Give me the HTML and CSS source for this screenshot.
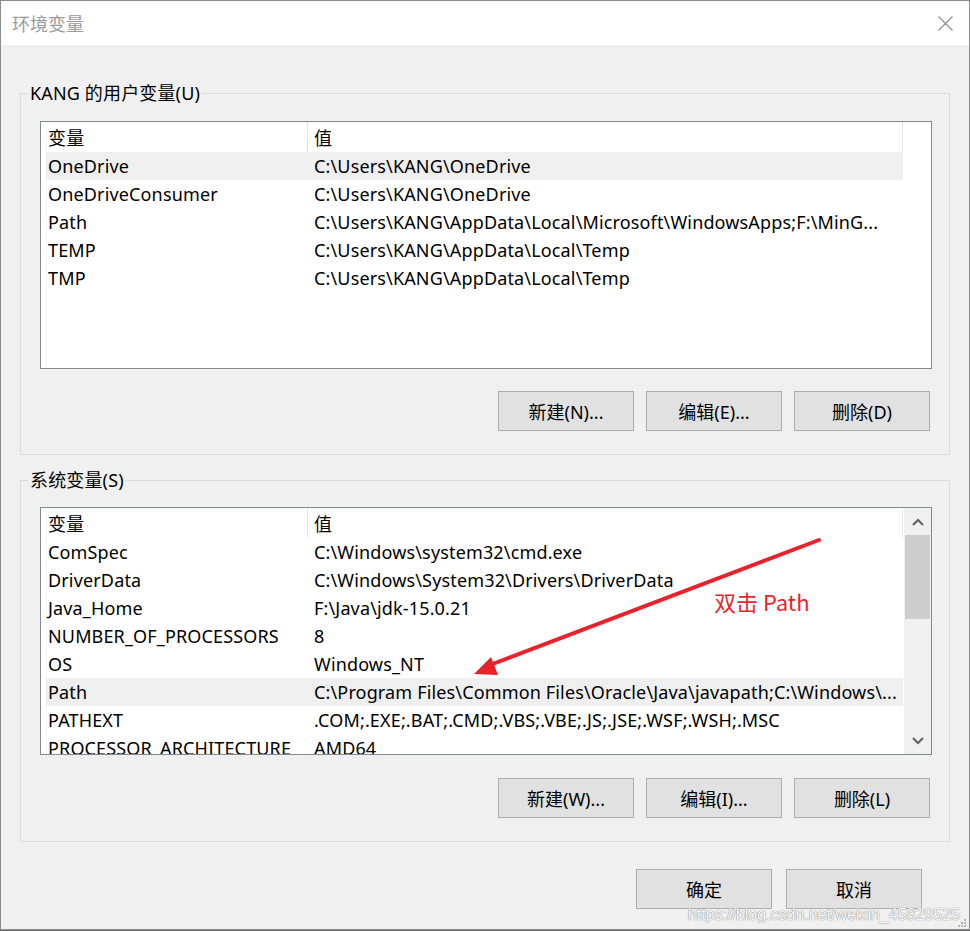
FILE: index.html
```html
<!DOCTYPE html>
<html lang="zh-CN">
<head>
<meta charset="utf-8">
<title>环境变量</title>
<link rel="stylesheet" href="styles.css">
</head>
<body>
<div class="window">
  <div class="titlebar">
    <span class="title">环境变量</span>
    <svg class="close" width="15" height="15" viewBox="0 0 15 15"><path d="M0.5 0.5 L14.5 14.5 M14.5 0.5 L0.5 14.5" stroke="#8a8a8a" stroke-width="1.1" fill="none"/></svg>
  </div>
  <div class="body">
    <fieldset class="group">
      <legend>KANG 的用户变量(U)</legend>
      <div class="list">
        <div class="table">
          <div class="row head"><div class="c1">变量</div><div class="c2">值</div></div>
          <div class="row sel"><div class="c1">OneDrive</div><div class="c2">C:\Users\KANG\OneDrive</div></div>
          <div class="row"><div class="c1">OneDriveConsumer</div><div class="c2">C:\Users\KANG\OneDrive</div></div>
          <div class="row"><div class="c1">Path</div><div class="c2">C:\Users\KANG\AppData\Local\Microsoft\WindowsApps;F:\MinG...</div></div>
          <div class="row"><div class="c1">TEMP</div><div class="c2">C:\Users\KANG\AppData\Local\Temp</div></div>
          <div class="row"><div class="c1">TMP</div><div class="c2">C:\Users\KANG\AppData\Local\Temp</div></div>
        </div>
      </div>
      <div class="buttons">
        <div class="btn">新建(N)...</div>
        <div class="btn">编辑(E)...</div>
        <div class="btn">删除(D)</div>
      </div>
    </fieldset>

    <fieldset class="group group-sys">
      <legend>系统变量(S)</legend>
      <div class="list">
        <div class="table">
          <div class="row head"><div class="c1">变量</div><div class="c2">值</div></div>
          <div class="row"><div class="c1">ComSpec</div><div class="c2">C:\Windows\system32\cmd.exe</div></div>
          <div class="row"><div class="c1">DriverData</div><div class="c2">C:\Windows\System32\Drivers\DriverData</div></div>
          <div class="row"><div class="c1">Java_Home</div><div class="c2">F:\Java\jdk-15.0.21</div></div>
          <div class="row"><div class="c1">NUMBER_OF_PROCESSORS</div><div class="c2">8</div></div>
          <div class="row"><div class="c1">OS</div><div class="c2">Windows_NT</div></div>
          <div class="row sel"><div class="c1">Path</div><div class="c2">C:\Program Files\Common Files\Oracle\Java\javapath;C:\Windows\...</div></div>
          <div class="row"><div class="c1">PATHEXT</div><div class="c2">.COM;.EXE;.BAT;.CMD;.VBS;.VBE;.JS;.JSE;.WSF;.WSH;.MSC</div></div>
          <div class="row"><div class="c1">PROCESSOR_ARCHITECTURE</div><div class="c2">AMD64</div></div>
        </div>
        <div class="scrollbar">
          <div class="sb-btn">
            <svg width="12" height="8" viewBox="0 0 12 8"><path d="M1 7 L6 2 L11 7" stroke="#606060" stroke-width="2" fill="none"/></svg>
          </div>
          <div class="thumb"></div>
          <div class="track"></div>
          <div class="sb-btn">
            <svg width="12" height="8" viewBox="0 0 12 8"><path d="M1 1 L6 6 L11 1" stroke="#606060" stroke-width="2" fill="none"/></svg>
          </div>
        </div>
      </div>
      <div class="buttons">
        <div class="btn">新建(W)...</div>
        <div class="btn">编辑(I)...</div>
        <div class="btn">删除(L)</div>
      </div>
    </fieldset>

    <div class="dialog-buttons">
      <div class="btn">确定</div>
      <div class="btn">取消</div>
    </div>
  </div>

  <svg class="annotation" width="970" height="931" viewBox="0 0 970 931">
    <line x1="819" y1="540" x2="490" y2="665" stroke="#e8212b" stroke-width="4" stroke-linecap="round"/>
    <polygon points="474,674 491,657 498,675" fill="#e8212b"/>
  </svg>
  <div class="note">双击 Path</div>
  <div class="watermark">https://blog.csdn.net/weixin_45829525</div>
  <svg class="grip" width="8" height="8" viewBox="0 0 8 8">
    <rect x="6" y="0" width="2" height="2" fill="#b8b8b8"/>
    <rect x="3" y="3" width="2" height="2" fill="#b8b8b8"/>
    <rect x="6" y="3" width="2" height="2" fill="#b8b8b8"/>
    <rect x="0" y="6" width="2" height="2" fill="#b8b8b8"/>
    <rect x="3" y="6" width="2" height="2" fill="#b8b8b8"/>
    <rect x="6" y="6" width="2" height="2" fill="#b8b8b8"/>
  </svg>
</div>
</body>
</html>
```

FILE: styles.css
```css
html, body {
  margin: 0;
  padding: 0;
}

body {
  background: #6b6b6b;
  font-family: "Noto Sans", "Noto Sans CJK SC", sans-serif;
  font-size: 18px;
  letter-spacing: 0.15px;
  color: #000;
}

.window {
  position: relative;
  width: 970px;
  height: 930px;
  box-sizing: border-box;
  border: 1px solid #8c8c8c;
  background: #f0f0f0;
  overflow: hidden;
}

.titlebar {
  height: 44px;
  background: #fff;
  display: flex;
  align-items: center;
  justify-content: space-between;
  padding: 0 16px 0 11px;
}

.title {
  font-family: "Noto Sans CJK SC", sans-serif;
  font-size: 18px;
  letter-spacing: 0;
  color: #9a9a9a;
}

.close {
  display: block;
}

.body {
  padding: 37px 19px 0 19px;
}

.group {
  margin: 0;
  padding: 17px 17px 23px 19px;
  border: 1px solid #dcdcdc;
  min-width: 0;
}

.group-sys {
  margin-top: 14px;
  padding-top: 16px;
}

.group legend {
  margin-left: -12px;
  padding: 0 2px;
  line-height: 22px;
  font-size: 18px;
}

.list {
  height: 248px;
  box-sizing: border-box;
  border: 1px solid #828790;
  background: #fff;
  display: flex;
  padding-left: 5px;
  overflow: hidden;
}

.table {
  width: 857px;
  flex: none;
}

.row {
  display: flex;
  height: 28px;
  align-items: center;
  white-space: nowrap;
}

.row.head {
  height: 30px;
  align-items: stretch;
}

.row.sel {
  background: #efefef;
}

.c1 {
  width: 262px;
  flex: none;
  box-sizing: border-box;
  padding-left: 2px;
  overflow: hidden;
}

.c2 {
  width: 595px;
  flex: none;
  box-sizing: border-box;
  padding-left: 6px;
  overflow: hidden;
  text-overflow: ellipsis;
}

.head .c1,
.head .c2 {
  display: flex;
  align-items: center;
  border-right: 1px solid #e5e5e5;
}

.scrollbar {
  width: 28px;
  flex: none;
  margin-left: 1px;
  display: flex;
  flex-direction: column;
  background: #f0f0f0;
}

.sb-btn {
  height: 27px;
  flex: none;
  display: flex;
  align-items: center;
  justify-content: center;
}

.thumb {
  height: 84px;
  flex: none;
  margin: 0 2px 0 1px;
  background: #cdcdcd;
}

.track {
  flex: 1;
}

.buttons {
  display: flex;
  justify-content: flex-end;
  gap: 12px;
  margin-top: 22px;
  padding-right: 2px;
}

.group-sys .buttons {
  margin-top: 23px;
}

.btn {
  width: 136px;
  height: 40px;
  box-sizing: border-box;
  border: 1px solid #adadad;
  background: #e1e1e1;
  font-size: 18px;
  letter-spacing: 0;
  display: flex;
  align-items: center;
  justify-content: center;
}

.dialog-buttons {
  display: flex;
  justify-content: flex-end;
  gap: 14px;
  margin-top: 27px;
  padding-right: 28px;
}

.annotation {
  position: absolute;
  left: -1px;
  top: -1px;
  pointer-events: none;
}

.note {
  position: absolute;
  left: 713px;
  top: 584px;
  font-family: "Noto Sans CJK SC", sans-serif;
  font-size: 22px;
  line-height: 32px;
  letter-spacing: 0;
  color: #e8262c;
}

.watermark {
  position: absolute;
  right: 9px;
  bottom: 5px;
  font-family: "Liberation Sans", sans-serif;
  font-size: 16px;
  letter-spacing: 0;
  color: rgba(255, 255, 255, 0.95);
  text-shadow: 0 0 1px #8c8c8c, 0 0 1px #8c8c8c;
}

.grip {
  position: absolute;
  right: 3px;
  bottom: 2px;
}
```
